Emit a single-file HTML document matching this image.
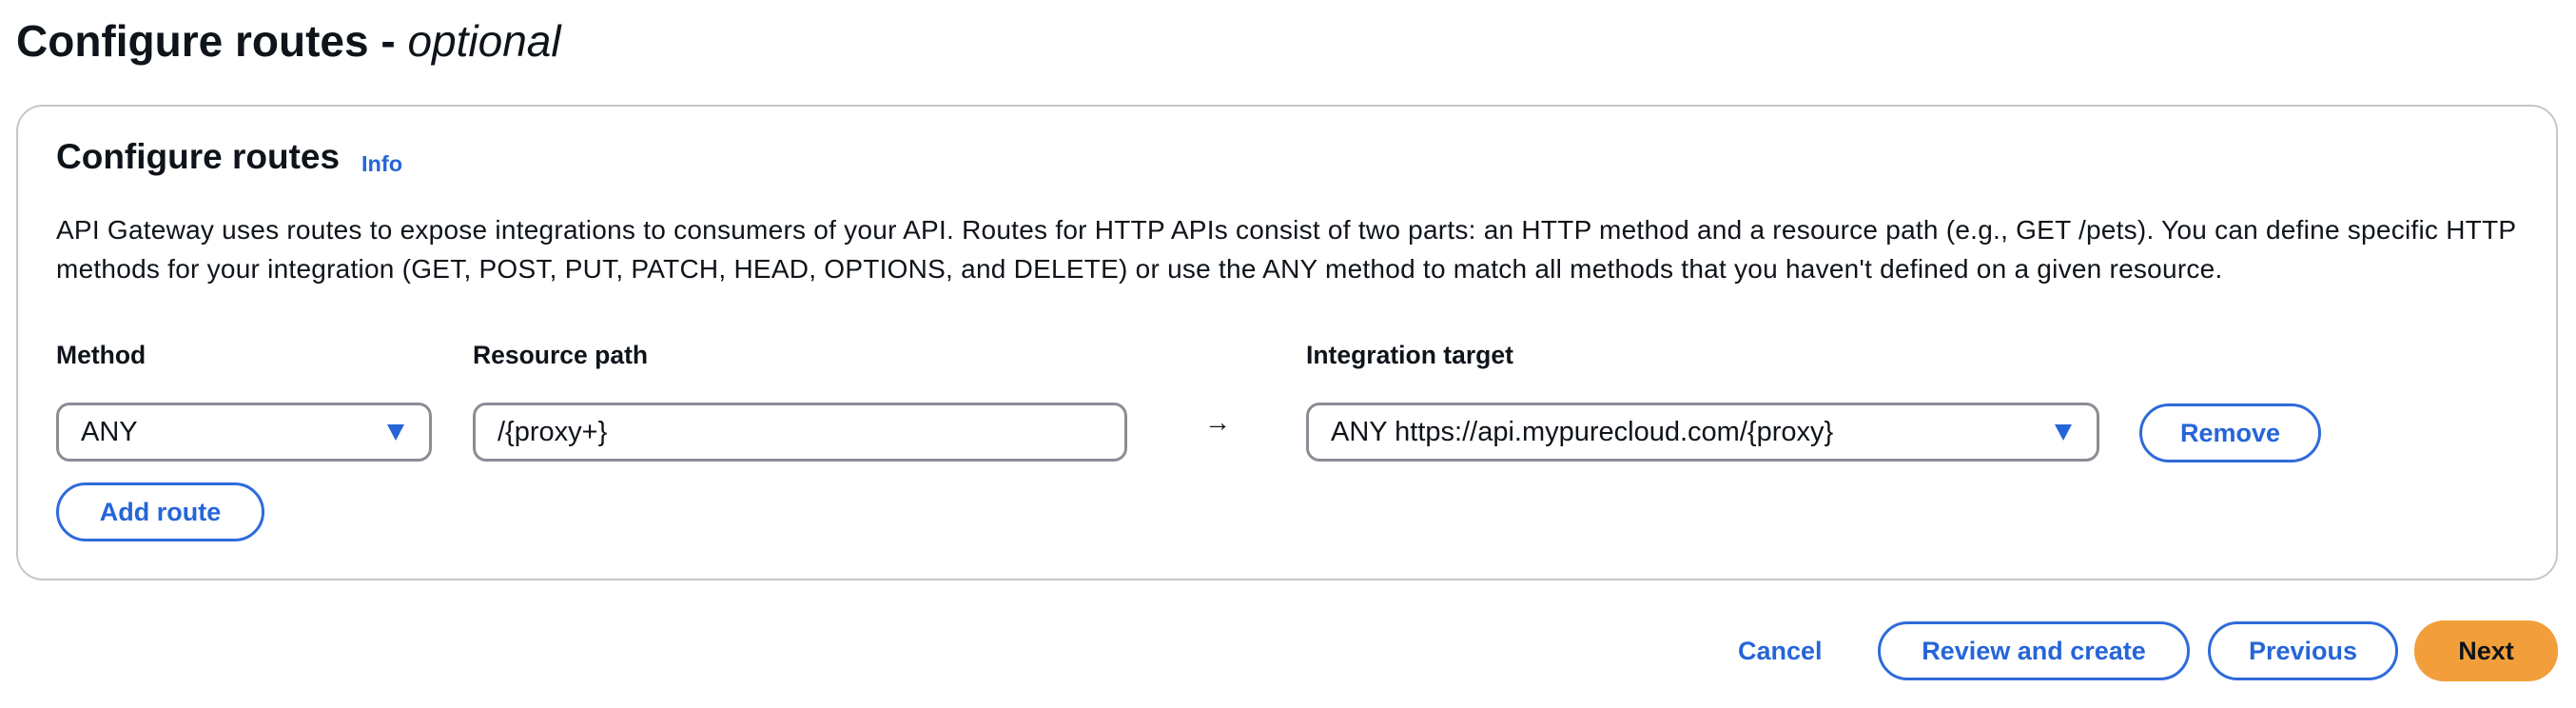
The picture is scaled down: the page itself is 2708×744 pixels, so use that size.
<!DOCTYPE html>
<html><head><meta charset="utf-8"><style>
*{margin:0;padding:0;box-sizing:border-box}
body{width:2708px;height:744px;background:#fff;font-family:"Liberation Sans",sans-serif;color:#0f141a;position:relative;overflow:hidden}
.a{position:absolute;white-space:nowrap}
h1{position:absolute;left:17px;top:16px;font-size:46px;font-weight:bold;letter-spacing:0px}
h1 i{font-weight:normal}
.card{position:absolute;left:17px;top:110px;width:2672px;height:500px;border:2px solid #c6c6cd;border-radius:28px}
.lbl{font-size:26.5px;font-weight:bold;top:358px}
.box{position:absolute;top:423px;height:62px;border:3px solid #8c8c94;border-radius:14px;font-size:29px;padding:0 0 0 23px;line-height:56px}
.caret{position:absolute;right:26px;top:20px;width:0;height:0;border-left:9px solid transparent;border-right:9px solid transparent;border-top:17px solid #2565d8}
.btn{position:absolute;height:62px;border:3px solid #2e6bd9;border-radius:31px;color:#2565d8;font-weight:bold;font-size:27px;text-align:center;line-height:56px;background:#fff}
</style></head><body>
<h1>Configure routes - <i>optional</i></h1>
<div class="card"></div>
<div class="a" style="left:59px;top:144px;font-size:37px;font-weight:bold">Configure routes</div>
<div class="a" style="left:380px;top:159px;font-size:23.5px;font-weight:bold;color:#2565d8">Info</div>
<div class="a" style="left:59px;top:221px;font-size:28px;line-height:41px;letter-spacing:0.25px">API Gateway uses routes to expose integrations to consumers of your API. Routes for HTTP APIs consist of two parts: an HTTP method and a resource path (e.g., GET /pets). You can define specific HTTP<br>methods for your integration (GET, POST, PUT, PATCH, HEAD, OPTIONS, and DELETE) or use the ANY method to match all methods that you haven't defined on a given resource.</div>
<div class="a lbl" style="left:59px">Method</div>
<div class="a lbl" style="left:497px">Resource path</div>
<div class="a lbl" style="left:1373px">Integration target</div>
<div class="box" style="left:59px;width:395px">ANY<div class="caret"></div></div>
<div class="box" style="left:497px;width:688px">/{proxy+}</div>
<div class="a" style="left:1266px;top:428px;font-size:28px">→</div>
<div class="box" style="left:1373px;width:834px">ANY https://api.mypurecloud.com/{proxy}<div class="caret"></div></div>
<div class="btn" style="left:2249px;top:424px;width:191px">Remove</div>
<div class="btn" style="left:59px;top:507px;width:219px">Add route</div>
<div class="a" style="left:1827px;top:669px;font-size:27px;font-weight:bold;color:#2565d8">Cancel</div>
<div class="btn" style="left:1974px;top:653px;width:328px">Review and create</div>
<div class="btn" style="left:2321px;top:653px;width:200px">Previous</div>
<div class="btn" style="left:2538px;top:652px;width:151px;height:64px;border:none;background:#f29f3b;color:#0f141a;line-height:64px">Next</div>
</body></html>
